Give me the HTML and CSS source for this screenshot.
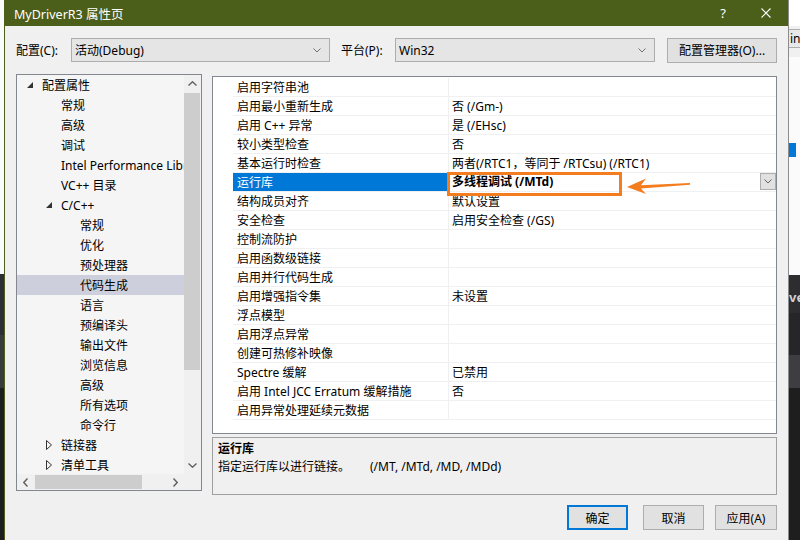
FILE: index.html
```html
<!DOCTYPE html>
<html lang="zh-CN">
<head>
    <meta charset="UTF-8">
    <title>MyDriverR3 属性页</title>
    <link rel="stylesheet" href="styles.css">
</head>
<body>
    <div class="screen">
        <div class="edge-left"></div>

        <div class="dialog">
            <div class="titlebar">
                <span class="title">MyDriverR3 属性页</span>
                <span class="help">?</span>
                <svg class="close" width="10" height="10" viewBox="0 0 10 10"><path d="M0.5 0.5 L9.5 9.5 M9.5 0.5 L0.5 9.5" stroke="#fff" stroke-width="1.1"/></svg>
            </div>

            <div class="toolbar">
                <span class="label">配置(C):</span>
                <div class="combo combo-config">
                    <span>活动(Debug)</span>
                    <svg width="8" height="5" viewBox="0 0 8 5"><polyline points="0.5,0.5 4,4 7.5,0.5" fill="none" stroke="#707070"/></svg>
                </div>
                <span class="label label-p">平台(P):</span>
                <div class="combo combo-platform">
                    <span>Win32</span>
                    <svg width="8" height="5" viewBox="0 0 8 5"><polyline points="0.5,0.5 4,4 7.5,0.5" fill="none" stroke="#707070"/></svg>
                </div>
                <button class="btn btn-manager">配置管理器(O)...</button>
            </div>

            <div class="main">
                <div class="tree">
                    <div class="tree-items">
                        <div class="tree-row lv0"><span class="twist"><svg width="6" height="6" viewBox="0 0 6 6"><polygon points="6,0 6,6 0,6" fill="#333"/></svg></span>配置属性</div>
                        <div class="tree-row lv1"><span class="twist"></span>常规</div>
                        <div class="tree-row lv1"><span class="twist"></span>高级</div>
                        <div class="tree-row lv1"><span class="twist"></span>调试</div>
                        <div class="tree-row lv1"><span class="twist"></span>Intel Performance Libraries</div>
                        <div class="tree-row lv1"><span class="twist"></span>VC++ 目录</div>
                        <div class="tree-row lv1"><span class="twist"><svg width="6" height="6" viewBox="0 0 6 6"><polygon points="6,0 6,6 0,6" fill="#333"/></svg></span>C/C++</div>
                        <div class="tree-row lv2"><span class="twist"></span>常规</div>
                        <div class="tree-row lv2"><span class="twist"></span>优化</div>
                        <div class="tree-row lv2"><span class="twist"></span>预处理器</div>
                        <div class="tree-row lv2 sel"><span class="twist"></span>代码生成</div>
                        <div class="tree-row lv2"><span class="twist"></span>语言</div>
                        <div class="tree-row lv2"><span class="twist"></span>预编译头</div>
                        <div class="tree-row lv2"><span class="twist"></span>输出文件</div>
                        <div class="tree-row lv2"><span class="twist"></span>浏览信息</div>
                        <div class="tree-row lv2"><span class="twist"></span>高级</div>
                        <div class="tree-row lv2"><span class="twist"></span>所有选项</div>
                        <div class="tree-row lv2"><span class="twist"></span>命令行</div>
                        <div class="tree-row lv1"><span class="twist"><svg width="6" height="10" viewBox="0 0 6 10"><polygon points="0.5,0.5 5.5,5 0.5,9.5" fill="none" stroke="#333"/></svg></span>链接器</div>
                        <div class="tree-row lv1"><span class="twist"><svg width="6" height="10" viewBox="0 0 6 10"><polygon points="0.5,0.5 5.5,5 0.5,9.5" fill="none" stroke="#333"/></svg></span>清单工具</div>
                    </div>
                    <div class="vscroll">
                        <div class="sb-btn"><svg width="9" height="5" viewBox="0 0 9 5"><polyline points="0.5,4.5 4.5,0.8 8.5,4.5" fill="none" stroke="#606060" stroke-width="1.4"/></svg></div>
                        <div class="vthumb"></div>
                        <div class="sb-fill"></div>
                        <div class="sb-btn"><svg width="9" height="5" viewBox="0 0 9 5"><polyline points="0.5,0.5 4.5,4.2 8.5,0.5" fill="none" stroke="#606060" stroke-width="1.4"/></svg></div>
                    </div>
                    <div class="hscroll">
                        <div class="sb-btn-h"><svg width="5" height="9" viewBox="0 0 5 9"><polyline points="4.5,0.5 0.8,4.5 4.5,8.5" fill="none" stroke="#606060" stroke-width="1.4"/></svg></div>
                        <div class="hthumb"></div>
                        <div class="sb-fill"></div>
                        <div class="sb-btn-h"><svg width="5" height="9" viewBox="0 0 5 9"><polyline points="0.5,0.5 4.2,4.5 0.5,8.5" fill="none" stroke="#606060" stroke-width="1.4"/></svg></div>
                    </div>
                    <div class="corner"></div>
                </div>

                <div class="right">
                    <div class="grid">
                        <div class="prow"><div class="gut"></div><div class="name">启用字符串池</div><div class="val"></div></div>
                        <div class="prow"><div class="gut"></div><div class="name">启用最小重新生成</div><div class="val">否 (/Gm-)</div></div>
                        <div class="prow"><div class="gut"></div><div class="name">启用 C++ 异常</div><div class="val">是 (/EHsc)</div></div>
                        <div class="prow"><div class="gut"></div><div class="name">较小类型检查</div><div class="val">否</div></div>
                        <div class="prow"><div class="gut"></div><div class="name">基本运行时检查</div><div class="val">两者(/RTC1，等同于 /RTCsu) (/RTC1)</div></div>
                        <div class="prow sel"><div class="gut"></div><div class="name">运行库</div><div class="val"><b>多线程调试 (/MTd)</b><span class="drop"><svg width="8" height="5" viewBox="0 0 8 5"><polyline points="0.5,0.5 4,4 7.5,0.5" fill="none" stroke="#606060"/></svg></span></div></div>
                        <div class="prow"><div class="gut"></div><div class="name">结构成员对齐</div><div class="val">默认设置</div></div>
                        <div class="prow"><div class="gut"></div><div class="name">安全检查</div><div class="val">启用安全检查 (/GS)</div></div>
                        <div class="prow"><div class="gut"></div><div class="name">控制流防护</div><div class="val"></div></div>
                        <div class="prow"><div class="gut"></div><div class="name">启用函数级链接</div><div class="val"></div></div>
                        <div class="prow"><div class="gut"></div><div class="name">启用并行代码生成</div><div class="val"></div></div>
                        <div class="prow"><div class="gut"></div><div class="name">启用增强指令集</div><div class="val">未设置</div></div>
                        <div class="prow"><div class="gut"></div><div class="name">浮点模型</div><div class="val"></div></div>
                        <div class="prow"><div class="gut"></div><div class="name">启用浮点异常</div><div class="val"></div></div>
                        <div class="prow"><div class="gut"></div><div class="name">创建可热修补映像</div><div class="val"></div></div>
                        <div class="prow"><div class="gut"></div><div class="name">Spectre 缓解</div><div class="val">已禁用</div></div>
                        <div class="prow"><div class="gut"></div><div class="name">启用 Intel JCC Erratum 缓解措施</div><div class="val">否</div></div>
                        <div class="prow"><div class="gut"></div><div class="name">启用异常处理延续元数据</div><div class="val"></div></div>
                    </div>
                    <div class="desc">
                        <div class="desc-title">运行库</div>
                        <div><span class="desc-text">指定运行库以进行链接。</span>(/MT, /MTd, /MD, /MDd)</div>
                    </div>
                </div>
            </div>

            <div class="actions">
                <button class="btn btn-ok">确定</button>
                <button class="btn btn-cancel">取消</button>
                <button class="btn btn-apply">应用(A)</button>
            </div>
        </div>

        <div class="edge-right">
            <div class="er-top"></div>
            <div class="er-gap"></div>
            <div class="er-combo">in3</div>
            <div class="er-gap2"></div>
            <div class="er-light"></div>
            <div class="er-blue"></div>
            <div class="er-light2"></div>
            <div class="er-dark1">ve</div>
            <div class="er-dark2"></div>
            <div class="er-dark3"></div>
            <div class="er-dark4"></div>
        </div>
    </div>

    <svg class="annot" width="800" height="540" viewBox="0 0 800 540">
        <rect x="448.5" y="173.5" width="172" height="21" fill="none" stroke="#f47d20" stroke-width="3"/>
        <polygon points="627,187 646,178.5 641,185.2 690,183 690,184.8 641,188.4 646,194" fill="#f47d20"/>
    </svg>
</body>
</html>
```

FILE: styles.css
```css
* {
    box-sizing: border-box;
}
body {
    margin: 0;
    width: 800px;
    height: 540px;
    overflow: hidden;
    position: relative;
    font-family: "Noto Sans", "Noto Sans CJK SC", sans-serif;
    font-size: 12px;
    color: #000;
}
.screen {
    display: flex;
    height: 540px;
}
.edge-left {
    width: 4px;
    flex: none;
    background: linear-gradient(to bottom, #fbfbfb 0, #fbfbfb 274px, #2f2f33 274px, #2f2f33 335px, #3a3a3d 335px, #3a3a3d 388px, #1e1e1e 388px);
}
.dialog {
    width: 785px;
    flex: none;
    border-left: 1px solid #4b5e1a;
    border-right: 1px solid #8c8c8c;
    background: #f0f0f0;
    display: flex;
    flex-direction: column;
}
.titlebar {
    height: 26px;
    flex: none;
    background: #4b5e1a;
    color: #fff;
    display: flex;
    align-items: center;
}
.title {
    padding-left: 9px;
    font-size: 12.5px;
}
.help {
    margin-left: auto;
    font-size: 13px;
}
.close {
    margin-left: 35px;
    margin-right: 17px;
}
.toolbar {
    display: flex;
    align-items: center;
    height: 24px;
    margin-top: 12px;
    padding-left: 11px;
}
.label {
    width: 55px;
    flex: none;
}
.label-p {
    width: 54px;
}
.combo {
    height: 24px;
    flex: none;
    border: 1px solid #adadad;
    background: #e5e5e5;
    display: flex;
    align-items: center;
    justify-content: space-between;
    padding: 0 8px 0 3px;
}
.combo-config {
    width: 259px;
    margin-right: 11px;
}
.combo-platform {
    width: 260px;
    margin-right: 12px;
}
.btn {
    height: 25px;
    flex: none;
    border: 1px solid #adadad;
    background: #e1e1e1;
    font-family: inherit;
    font-size: 12px;
    color: #000;
    padding: 0;
}
.btn-manager {
    width: 110px;
}
.main {
    display: flex;
    gap: 10px;
    margin-top: 12px;
    padding-left: 11px;
}
.tree {
    width: 186px;
    height: 417px;
    flex: none;
    border: 1px solid #828790;
    background: #f5f5f5;
    display: grid;
    grid-template-columns: 167px 17px;
    grid-template-rows: 399px 16px;
}
.tree-items {
    overflow: hidden;
}
.tree-row {
    height: 20px;
    display: flex;
    align-items: center;
    white-space: nowrap;
}
.tree-row.sel {
    background: #cdd0dc;
}
.lv0 {
    padding-left: 10px;
}
.lv1 {
    padding-left: 29px;
}
.lv2 {
    padding-left: 48px;
}
.twist {
    width: 15px;
    flex: none;
    display: flex;
    align-items: center;
}
.vscroll {
    background: #f0f0f0;
    display: flex;
    flex-direction: column;
}
.sb-btn {
    height: 17px;
    flex: none;
    display: flex;
    align-items: center;
    justify-content: center;
}
.sb-fill {
    flex: 1;
}
.vthumb {
    height: 277px;
    flex: none;
    margin: 1px 1px 0 0;
    background: #cdcdcd;
}
.hscroll {
    background: #f0f0f0;
    display: flex;
}
.sb-btn-h {
    width: 17px;
    flex: none;
    display: flex;
    align-items: center;
    justify-content: center;
}
.hthumb {
    width: 107px;
    flex: none;
    margin: 1px 0 1px 1px;
    background: #cdcdcd;
}
.corner {
    background: #f0f0f0;
}
.right {
    width: 565px;
    flex: none;
    padding-top: 2px;
    display: flex;
    flex-direction: column;
}
.grid {
    height: 358px;
    border: 1px solid #828790;
    background: #fff;
    padding-top: 1px;
}
.prow {
    display: grid;
    grid-template-columns: 20px 216px 1fr;
    height: 19px;
}
.prow .name {
    border-bottom: 1px solid #f0f0f0;
    border-right: 1px solid #f0f0f0;
    padding: 1px 0 0 4px;
    line-height: 17px;
    white-space: nowrap;
}
.prow .val {
    border-bottom: 1px solid #f0f0f0;
    padding: 1px 0 0 3px;
    line-height: 17px;
    white-space: nowrap;
    display: flex;
    justify-content: space-between;
}
.prow.sel .name {
    background: #0078d7;
    color: #fff;
}
.prow.sel .val {
    padding-top: 0;
    line-height: 18px;
}
.drop {
    width: 16px;
    height: 17px;
    border: 1px solid #adadad;
    background: #e1e1e1;
    display: flex;
    align-items: center;
    justify-content: center;
}
.desc {
    height: 58px;
    margin-top: 3px;
    border: 1px solid #a0a0a0;
    padding: 2px 5px;
    line-height: 18px;
}
.desc-title {
    font-weight: bold;
}
.desc-text {
    display: inline-block;
    width: 152px;
}
.actions {
    display: flex;
    justify-content: flex-end;
    margin-top: 10px;
    padding-right: 11px;
}
.btn-ok {
    width: 61px;
    margin-right: 15px;
    border: 2px solid #0078d7;
}
.btn-cancel {
    width: 61px;
    margin-right: 11px;
}
.btn-apply {
    width: 62px;
}
.edge-right {
    width: 11px;
    flex: none;
    display: flex;
    flex-direction: column;
    overflow: hidden;
}
.er-top {
    height: 26px;
    background: #fff;
}
.er-gap {
    height: 3px;
    background: #f0f0f0;
}
.er-combo {
    height: 19px;
    border-top: 1px solid #adadad;
    border-bottom: 1px solid #adadad;
    background: #e8e8e8;
    line-height: 17px;
    padding-left: 1px;
    white-space: nowrap;
}
.er-gap2 {
    height: 9px;
    background: #f0f0f0;
}
.er-light {
    height: 86px;
    background: #fbfbfb;
}
.er-blue {
    height: 14px;
    background: linear-gradient(to right, #0078d7 0, #0078d7 7px, #fbfbfb 7px);
}
.er-light2 {
    height: 118px;
    background: #fbfbfb;
}
.er-dark1 {
    height: 38px;
    background: #2d2d30;
    color: #d0d0d0;
    font-weight: bold;
    padding-top: 14px;
    line-height: 16px;
    font-size: 13px;
}
.er-dark2 {
    height: 42px;
    background: #262628;
}
.er-dark3 {
    height: 33px;
    background: #3e3e42;
}
.er-dark4 {
    flex: 1;
    background: #1e1e1e;
}
.annot {
    position: absolute;
    top: 0;
    left: 0;
    pointer-events: none;
}
```
